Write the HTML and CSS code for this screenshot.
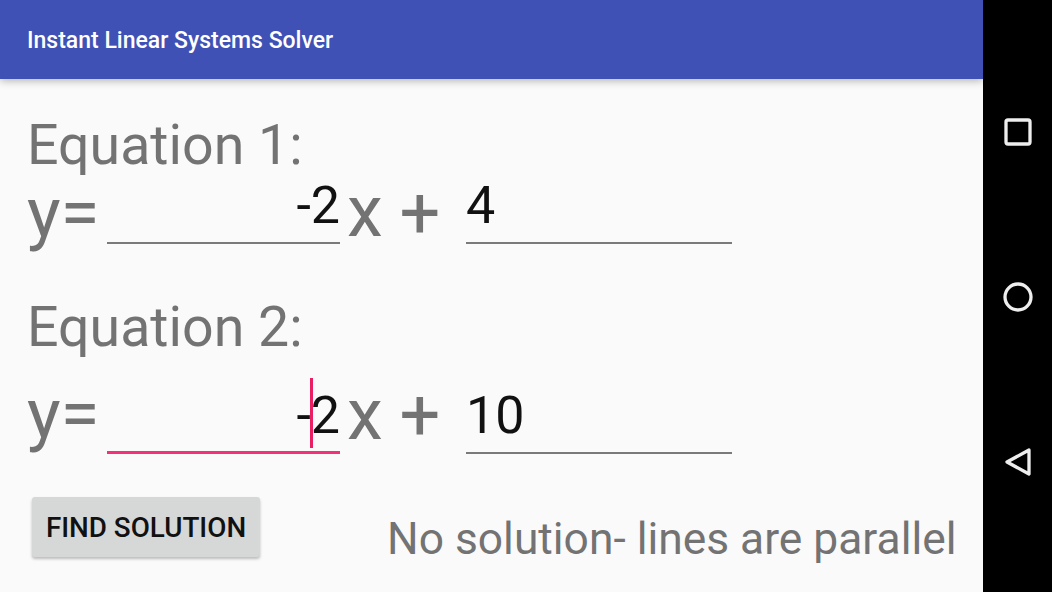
FILE: index.html
```html
<!DOCTYPE html>
<html lang="en">
<head>
<meta charset="utf-8">
<title>Instant Linear Systems Solver</title>
<link rel="stylesheet" href="styles.css">
</head>
<body>
<div class="screen">
  <div class="app">
    <header class="toolbar"><span class="title">Instant Linear Systems Solver</span></header>
    <main class="content">
      <div class="label label-first">Equation 1:</div>
      <div class="row row-first">
        <span class="term term-y">y=</span>
        <div class="field field-a"><span class="value">-2</span></div>
        <span class="term term-x">x</span>
        <span class="term term-plus">+</span>
        <div class="field field-b"><span class="value">4</span></div>
      </div>
      <div class="label label-second">Equation 2:</div>
      <div class="row row-second">
        <span class="term term-y">y=</span>
        <div class="field field-a field-focus"><span class="value">-<span class="caret"></span>2</span></div>
        <span class="term term-x">x</span>
        <span class="term term-plus">+</span>
        <div class="field field-b"><span class="value">10</span></div>
      </div>
      <div class="actions">
        <button class="button" type="button">FIND SOLUTION</button>
        <span class="result">No solution- lines are parallel</span>
      </div>
    </main>
  </div>
  <nav class="navbar">
    <svg class="nav-icon" viewBox="0 0 28 28"><rect x="2" y="2" width="24" height="24" rx="2"/></svg>
    <svg class="nav-icon" viewBox="0 0 32 32"><circle cx="16" cy="16" r="13"/></svg>
    <svg class="nav-icon" viewBox="0 0 28 30"><path d="M25 3 L3 15 L25 27 Z"/></svg>
  </nav>
</div>
</body>
</html>
```
FILE: styles.css
```css
* { box-sizing: border-box; }
html, body { margin: 0; height: 100%; }
body { font-family: Roboto, "Noto Sans", sans-serif; background: #000; overflow: hidden; }
.screen { display: flex; width: 1052px; height: 592px; }
.app { width: 983px; height: 592px; background: #fafafa; display: flex; flex-direction: column; }
.toolbar {
  height: 79px; flex: none; padding: 2px 27px 0; display: flex; align-items: center;
  background: #3f51b5; color: #fff; font-size: 23px; font-weight: 500;
  box-shadow: 0 2px 8px rgba(0,0,0,.28);
  position: relative;
}
.content { flex: 1; padding: 0 27px; display: flex; flex-direction: column; }
.label { font-size: 55.5px; line-height: 60px; height: 60px; color: #737373; }
.label-first { margin-top: 37px; }
.label-second { margin-top: 54px; }
.row { display: flex; align-items: flex-start; position: relative; }
.row-first { height: 68px; }
.row-second { height: 95px; margin-top: 1px; }
.term { color: #737373; font-size: 72px; line-height: 60px; }
.term-y { flex: none; width: 80px; font-size: 71px; }
.row-first .term-y { margin-top: 7px; }
.row-second .term-y { margin-top: 25px; }
.term-x { flex: none; width: 52.5px; margin-left: 7px; }
.row-first .term-x { margin-top: 6px; }
.row-second .term-x { margin-top: 26px; }
.term-plus { flex: none; width: 66.5px; }
.row-first .term-plus { margin-top: 7px; }
.row-second .term-plus { margin-top: 26px; }
.field { flex: none; border-bottom: 2px solid #7a7a7a; display: flex; align-items: flex-end; color: #111; font-size: 52px; line-height: 60px; height: 100%; }
.field-a { width: 233px; justify-content: flex-end; }
.field-b { width: 266px; }
.row-first .value { margin-bottom: 6px; }
.row-second .value { margin-bottom: 6px; }
.field-focus { border-bottom: 3px solid #f4307a; }
.row-second .field-focus .value { margin-bottom: 5px; }
.value { position: relative; display: block; }
.caret { position: absolute; left: 14px; top: -8px; bottom: -2px; width: 2.5px; background: #e91e63; }
.actions { display: flex; align-items: flex-start; margin-top: 43px; padding-left: 5px; }
.button {
  flex: none; width: 228px; height: 60px; border: 0; border-radius: 3px; background: #d6d7d7; color: #111;
  font-family: inherit; font-size: 27.8px; font-weight: 500; padding: 0;
  box-shadow: 0 2px 3px rgba(0,0,0,.25);
}
.result { margin-left: 127px; margin-top: 12px; font-size: 44.35px; line-height: 60px; color: #737373; white-space: nowrap; }
.navbar { width: 69px; height: 592px; background: #000; display: flex; flex-direction: column; align-items: center; padding-top: 118px; }
.nav-icon { fill: none; stroke: #eee; stroke-width: 3.3; display: block; }
.nav-icon:nth-child(1) { width: 28px; height: 28px; }
.nav-icon:nth-child(2) { width: 32px; height: 32px; margin-top: 135px; }
.nav-icon:nth-child(3) { width: 28px; height: 30px; margin-top: 134px; stroke-linejoin: round; }
```
